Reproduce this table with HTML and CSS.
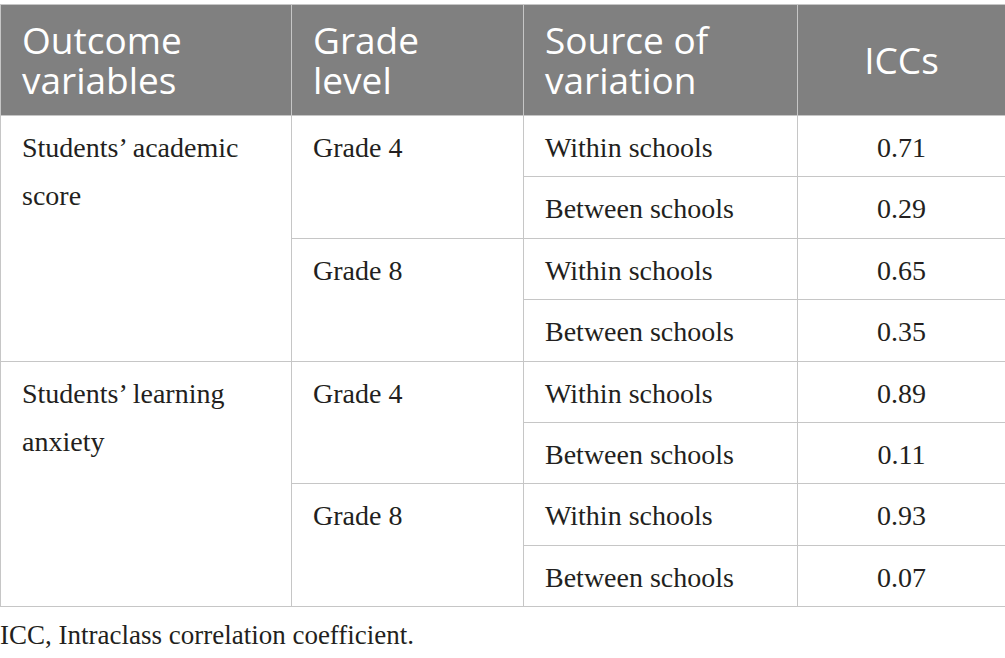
FILE: index.html
```html
<!DOCTYPE html>
<html lang="en">
<head>
  <meta charset="UTF-8" />
  <title>ICCs table</title>
  <link rel="stylesheet" href="styles.css">
</head>
<body>

  <!-- TABLE -->
  <table class="icc-table">
    <colgroup>
      <col class="col-outcome">
      <col class="col-grade">
      <col class="col-source">
      <col class="col-icc">
    </colgroup>
    <thead>
      <tr>
        <th>Outcome variables</th>
        <th>Grade level</th>
        <th>Source of variation</th>
        <th class="center">ICCs</th>
      </tr>
    </thead>
    <tbody>
      <tr>
        <td rowspan="4">Students’ academic score</td>
        <td rowspan="2">Grade 4</td>
        <td>Within schools</td>
        <td class="center">0.71</td>
      </tr>
      <tr>
        <td>Between schools</td>
        <td class="center">0.29</td>
      </tr>
      <tr>
        <td rowspan="2">Grade 8</td>
        <td>Within schools</td>
        <td class="center">0.65</td>
      </tr>
      <tr>
        <td>Between schools</td>
        <td class="center">0.35</td>
      </tr>
      <tr>
        <td rowspan="4">Students’ learning anxiety</td>
        <td rowspan="2">Grade 4</td>
        <td>Within schools</td>
        <td class="center">0.89</td>
      </tr>
      <tr>
        <td>Between schools</td>
        <td class="center">0.11</td>
      </tr>
      <tr>
        <td rowspan="2">Grade 8</td>
        <td>Within schools</td>
        <td class="center">0.93</td>
      </tr>
      <tr>
        <td>Between schools</td>
        <td class="center">0.07</td>
      </tr>
    </tbody>
  </table>

  <!-- FOOTNOTE -->
  <p class="table-note">ICC, Intraclass correlation coefficient.</p>

</body>
</html>
```

FILE: styles.css
```css
* {
  box-sizing: border-box;
}

body {
  margin: 0;
  padding: 4px 0 0 0;
  background: #fff;
  color: #231f20;
  font-family: "Liberation Serif", "Times New Roman", serif;
}

/* === TABLE === */
.icc-table {
  width: 1005px;
  border-collapse: collapse;
  table-layout: fixed;
}

.col-outcome { width: 291px; }
.col-grade { width: 232px; }
.col-source { width: 274px; }
.col-icc { width: 208px; }

.icc-table th,
.icc-table td {
  border: 1px solid #c6c6c6;
  text-align: left;
  vertical-align: top;
}

.icc-table th {
  background-color: #808080;
  color: #fff;
  font-family: "Open Sans", "Liberation Sans", sans-serif;
  font-weight: 400;
  font-size: 37px;
  line-height: 40px;
  padding: 15px 21px 15px 21px;
  vertical-align: middle;
}

.icc-table td {
  font-size: 28px;
  line-height: 48px;
  padding: 8px 21px 4.4px 21px;
}

.icc-table .center {
  text-align: center;
  padding-left: 0;
  padding-right: 0;
}

/* === FOOTNOTE === */
.table-note {
  margin: 8px 0 0 0;
  font-size: 27px;
  line-height: 40px;
}
```
